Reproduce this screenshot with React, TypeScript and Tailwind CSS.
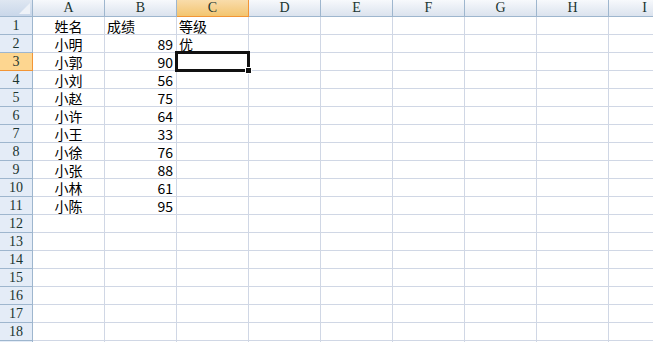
import React from "react";

const COLS = ["A", "B", "C", "D", "E", "F", "G", "H", "I"];

const DATA: [string, string, string][] = [
    ["姓名", "成绩", "等级"],
    ["小明", "89", "优"],
    ["小郭", "90", ""],
    ["小刘", "56", ""],
    ["小赵", "75", ""],
    ["小许", "64", ""],
    ["小王", "33", ""],
    ["小徐", "76", ""],
    ["小张", "88", ""],
    ["小林", "61", ""],
    ["小陈", "95", ""],
];

const cellFont = { fontFamily: '"Noto Sans CJK SC", "Noto Sans", sans-serif' };
const headFont = { fontFamily: '"Liberation Serif", "DejaVu Serif", serif' };

function ColumnHeader({ label, active }: { label: string; active: boolean }) {
    return (
        <div
            className={
                active
                    ? "w-[72px] h-[17px] shrink-0 flex items-center justify-center border-r border-b border-[#f29536] bg-gradient-to-b from-[#f9dcaa] to-[#f3c56f] text-[14px] leading-none text-[#1b3530]"
                    : "w-[72px] h-[17px] shrink-0 flex items-center justify-center border-r border-b border-[#9eb6ce] bg-gradient-to-b from-[#f7f9fc] to-[#dbe3ee] text-[14px] leading-none text-[#1b3530]"
            }
            style={headFont}
        >
            {label}
        </div>
    );
}

function RowHeader({ n, active, label }: { n: number; active: boolean; label: boolean }) {
    return (
        <div
            className={
                active
                    ? "w-[33px] h-[18px] shrink-0 flex items-center justify-center border-r border-b border-[#f29536] bg-[#fdd690] text-[14px] leading-none text-[#1b3530]"
                    : "w-[33px] h-[18px] shrink-0 flex items-center justify-center border-r border-b border-[#9eb6ce] bg-[#e4ecf7] text-[14px] leading-none text-[#1b3530]"
            }
            style={headFont}
        >
            {label ? n : ""}
        </div>
    );
}

export default function App() {
    const rows = Array.from({ length: 19 }, (_, i) => i + 1);

    return (
        <div className="relative w-[653px] h-[342px] overflow-hidden bg-white">
            {/* column headers */}
            <div className="flex">
                <div className="w-[33px] h-[17px] shrink-0 border-r border-b border-[#9eb6ce] bg-gradient-to-b from-[#dfe7f2] to-[#c9d7ea] flex items-end justify-end p-[2px]">
                    <svg width="11" height="11" viewBox="0 0 11 11">
                        <polygon points="11,0 11,11 0,11" fill="#eef2f8" />
                    </svg>
                </div>
                {COLS.map((c) => (
                    <ColumnHeader key={c} label={c} active={c === "C"} />
                ))}
            </div>

            {/* rows */}
            {rows.map((n) => {
                const r = DATA[n - 1];
                return (
                    <div key={n} className="flex">
                        <RowHeader n={n} active={n === 3} label={n <= 18} />
                        {COLS.map((c, ci) => {
                            let text = "";
                            let align = "justify-start pl-[2px]";
                            if (r) {
                                if (ci === 0) {
                                    text = r[0];
                                    align = "justify-center";
                                } else if (ci === 1) {
                                    text = r[1];
                                    align = n === 1 ? "justify-start pl-[2px]" : "justify-end pr-[3px]";
                                } else if (ci === 2) {
                                    text = r[2];
                                }
                            }
                            return (
                                <div
                                    key={c}
                                    className={`w-[72px] h-[18px] shrink-0 flex items-center pt-[1px] ${align} border-r border-b border-[#d0d7e5] text-[14px] leading-[14px] text-black`}
                                    style={cellFont}
                                >
                                    {text}
                                </div>
                            );
                        })}
                    </div>
                );
            })}

            {/* active cell C3 */}
            <div className="absolute left-[175px] top-[51px] w-[75px] h-[21px] border-[3px] border-[#111]" />
            <div className="absolute left-[245px] top-[67px] w-[7px] h-[7px] bg-[#111] border border-white" />
        </div>
    );
}
